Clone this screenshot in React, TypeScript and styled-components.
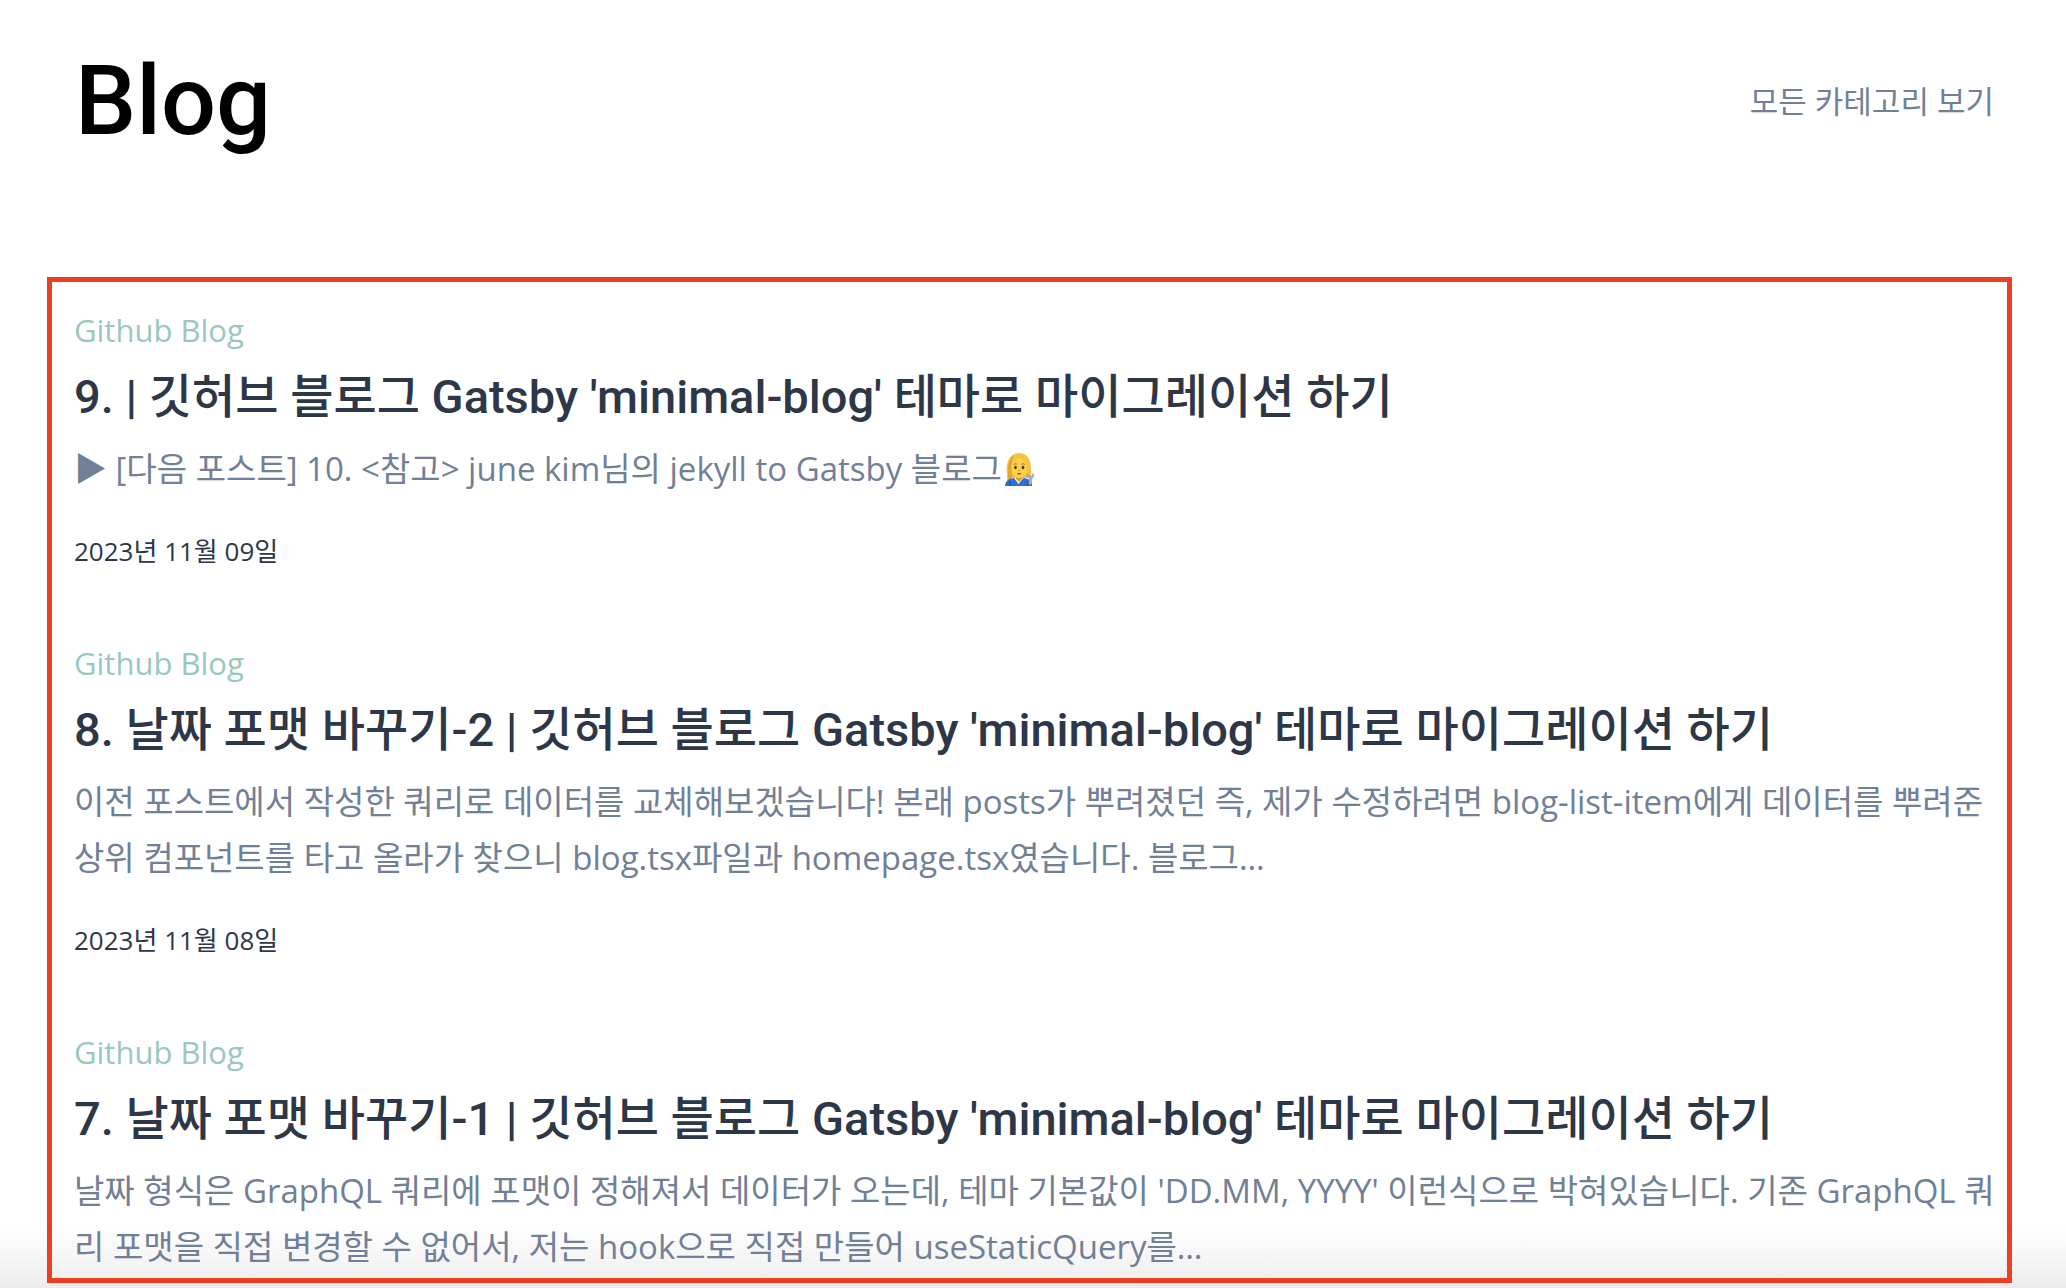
import React from 'react';
import styled, { createGlobalStyle } from 'styled-components';

const colors = {
  heading: '#2d3748',
  text: '#2d3748',
  secondary: '#718096',
  accent: '#98c9bb',
  frame: '#eb4025',
};

const fonts = {
  body: '"Open Sans", "Noto Sans CJK KR", sans-serif',
  heading: 'Roboto, "Noto Sans CJK KR", sans-serif',
};

const GlobalStyle = createGlobalStyle`
  body {
    margin: 0;
    background: #ffffff;
    color: ${colors.text};
    font-family: ${fonts.body};
  }
`;

const Page = styled.div`
  box-sizing: border-box;
  min-height: 100vh;
  padding-bottom: 5px;
  background: linear-gradient(to top, #ebebeb 0, #f4f4f4 24px, #ffffff 64px);
`;

const Header = styled.header`
  display: flex;
  align-items: center;
  justify-content: space-between;
  padding: 45px 72px 120px 75px;
`;

const PageTitle = styled.h1`
  margin: 0;
  color: #000000;
  font-family: ${fonts.heading};
  font-size: 97px;
  line-height: 112px;
  font-weight: 500;
`;

const CategoriesLink = styled.a`
  color: ${colors.secondary};
  font-size: 31px;
  line-height: 40px;
  text-decoration: none;
`;

const PostList = styled.main`
  display: flex;
  flex-direction: column;
  gap: 66px;
  margin: 0 54px 0 47px;
  padding: 22px 10px 3px 22px;
  border: 5px solid ${colors.frame};
`;

const Category = styled.a`
  display: block;
  width: fit-content;
  color: ${colors.accent};
  font-size: 31px;
  line-height: 52px;
  text-decoration: none;
`;

const PostTitle = styled.h2`
  margin: 13px 0 16px;
  font-family: ${fonts.heading};
  font-size: 47px;
  line-height: 56px;
  font-weight: 500;
`;

const TitleLink = styled.a`
  color: ${colors.heading};
  text-decoration: none;
`;

const Excerpt = styled.p`
  margin: 0;
  color: ${colors.secondary};
  font-size: 33px;
  line-height: 56px;
`;

const PostDate = styled.time`
  display: block;
  margin-top: 34px;
  font-size: 26px;
  line-height: 40px;
`;

const Emoji = styled.svg`
  width: 34px;
  height: 34px;
  vertical-align: -5px;
`;

function MechanicEmoji() {
  return (
    <Emoji viewBox="0 0 34 34" role="img" aria-label="여성 정비공">
      <path d="M5 33V22C4 16 5 9 8 5.500C11 1.500 17 -.5 22 2C27 4.500 29 10 29 16C29 20 30 22 28 26H8Z" fill="#f3c443" />
      <path d="M6 30V17C6 11 8 6 12 3.500C9 9 9 17 10 28Z" fill="#dfa52c" />
      <path d="M3 34C3 29.500 6 27 12 26H22C28 27 30 29.500 30 34Z" fill="#2f6fd6" />
      <path d="M12 26L16.500 32L21.500 26Z" fill="#f4f6fb" />
      <path d="M14 23H20V27L17 30L14 27Z" fill="#dd9d2b" />
      <path d="M9.500 14C9.500 9 14 10 17 5C19 9 25 9 25 15C25 21 21 26 17.200 26C13 26 9.500 21 9.500 14Z" fill="#fbd04d" />
      <ellipse cx="13.500" cy="15.500" rx="1.300" ry="1.700" fill="#4a2d14" />
      <ellipse cx="21" cy="15.500" rx="1.300" ry="1.700" fill="#4a2d14" />
      <path d="M11.500 12.500Q13.500 11 15 12.300M19.500 12.300Q21 11 23 12.500" fill="none" stroke="#a8701c" strokeWidth="1" />
      <path d="M16.300 18.500Q17.200 19.300 18.200 18.500" fill="none" stroke="#c58a22" strokeWidth="1" />
      <path d="M14.800 21.500Q17.200 20.500 19.600 21.500Q17.200 23.500 14.800 21.500Z" fill="#8f3a1c" />
      <path d="M8 29V34M26 30V34" stroke="#1e4fae" strokeWidth="1.500" />
      <path d="M25.500 21.500C24.500 24 26 26 27.500 26.500L26.500 32.500H29L29.800 26.500C31.500 26 32.300 23.500 31 21.500L30.300 24H27.200Z" fill="#a7b3be" stroke="#7c8995" strokeWidth=".5" />
    </Emoji>
  );
}

interface Post {
  slug: string;
  title: string;
  excerpt: React.ReactNode;
  date?: { iso: string; label: string };
}

const posts: Post[] = [
  {
    slug: 'post-9',
    title: "9. | 깃허브 블로그 Gatsby 'minimal-blog' 테마로 마이그레이션 하기",
    excerpt: (
      <>
        ▶ [다음 포스트] 10. &lt;참고&gt; june kim님의 jekyll to Gatsby 블로그
        <MechanicEmoji />
      </>
    ),
    date: { iso: '2023-11-09', label: '2023년 11월 09일' },
  },
  {
    slug: 'post-8',
    title: "8. 날짜 포맷 바꾸기-2 | 깃허브 블로그 Gatsby 'minimal-blog' 테마로 마이그레이션 하기",
    excerpt:
      '이전 포스트에서 작성한 쿼리로 데이터를 교체해보겠습니다! 본래 posts가 뿌려졌던 즉, 제가 수정하려면 blog-list-item에게 데이터를 뿌려준 상위 컴포넌트를 타고 올라가 찾으니 blog.tsx파일과 homepage.tsx였습니다. 블로그…',
    date: { iso: '2023-11-08', label: '2023년 11월 08일' },
  },
  {
    slug: 'post-7',
    title: "7. 날짜 포맷 바꾸기-1 | 깃허브 블로그 Gatsby 'minimal-blog' 테마로 마이그레이션 하기",
    excerpt:
      "날짜 형식은 GraphQL 쿼리에 포맷이 정해져서 데이터가 오는데, 테마 기본값이 'DD.MM, YYYY' 이런식으로 박혀있습니다. 기존 GraphQL 쿼리 포맷을 직접 변경할 수 없어서, 저는 hook으로 직접 만들어 useStaticQuery를…",
  },
];

export default function App() {
  return (
    <Page>
      <GlobalStyle />
      <Header>
        <PageTitle>Blog</PageTitle>
        <CategoriesLink href="#categories">모든 카테고리 보기</CategoriesLink>
      </Header>
      <PostList>
        {posts.map((post) => (
          <article key={post.slug}>
            <Category href="#github-blog">Github Blog</Category>
            <PostTitle>
              <TitleLink href={`#${post.slug}`}>{post.title}</TitleLink>
            </PostTitle>
            <Excerpt>{post.excerpt}</Excerpt>
            {post.date && <PostDate dateTime={post.date.iso}>{post.date.label}</PostDate>}
          </article>
        ))}
      </PostList>
    </Page>
  );
}
